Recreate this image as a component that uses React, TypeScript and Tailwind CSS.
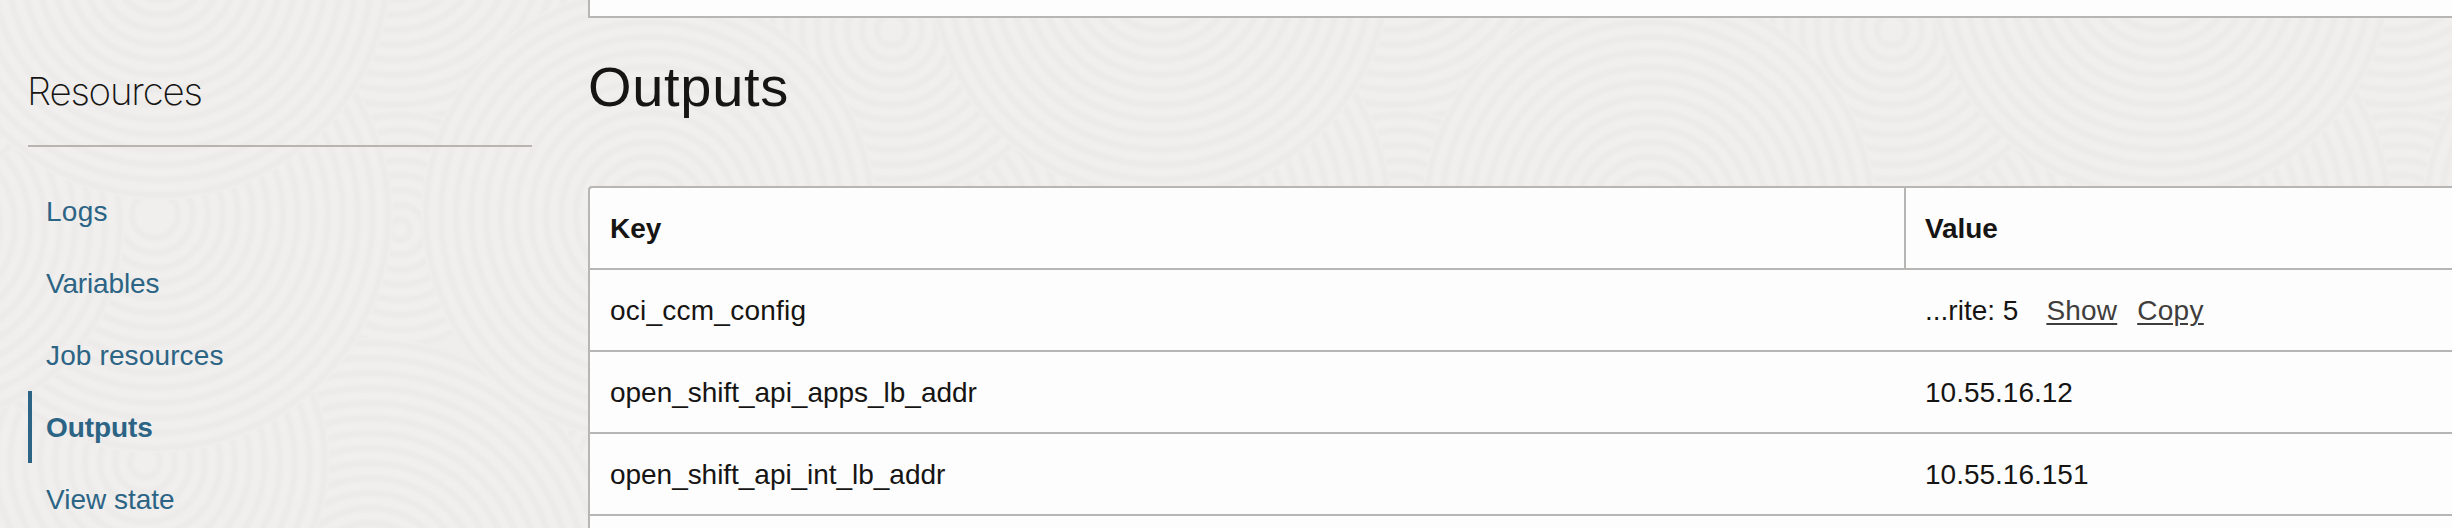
import React from "react";

type Disc = { x: number; y: number; r: number };

const TILE = 1000;

const discs: Disc[] = [
  { x: 395, y: -60, r: 215 },
  { x: 400, y: 230, r: 120 },
  { x: 700, y: 500, r: 240 },
  { x: 370, y: 590, r: 252 },
  { x: 145, y: 462, r: 185 },
  { x: 155, y: 215, r: 238 },
  { x: 925, y: 225, r: 200 },
  { x: 892, y: 30, r: 170 },
  { x: 649, y: 215, r: 228 },
  { x: 160, y: -32, r: 232 },
];

function Backdrop() {
  return (
    <svg className="absolute inset-0 h-full w-full" aria-hidden="true">
      <defs>
        <pattern id="rings" width={TILE} height="528" patternUnits="userSpaceOnUse">
          <rect width={TILE} height="528" fill="#efeeec" />
          {discs.map((d, i) =>
            [-TILE, 0, TILE].map((dx) => (
              <g key={`${i}${dx}`}>
                <circle cx={d.x + dx} cy={d.y} r={d.r} fill="#f0efed" />
                {Array.from({ length: Math.floor(d.r / 15) }, (_, k) => (
                  <circle
                    key={k}
                    cx={d.x + dx}
                    cy={d.y}
                    r={d.r - 5 - k * 15}
                    fill="none"
                    stroke="#eeedeb"
                    strokeWidth="8"
                  />
                ))}
                {Array.from({ length: Math.floor(d.r / 15) }, (_, k) => (
                  <circle
                    key={k}
                    cx={d.x + dx}
                    cy={d.y}
                    r={d.r - 5 - k * 15}
                    fill="none"
                    stroke="#ecebe9"
                    strokeWidth="4"
                  />
                ))}
              </g>
            ))
          )}
        </pattern>
      </defs>
      <rect width="100%" height="100%" fill="url(#rings)" />
    </svg>
  );
}

const links = [
  { label: "Logs", track: "tracking-[0.3px]" },
  { label: "Variables", track: "tracking-[-0.15px]" },
  { label: "Job resources", track: "tracking-[0.13px]" },
  { label: "Outputs", track: "tracking-[-0.1px]", active: true },
  { label: "View state", track: "" },
];

const rows = [
  { key: "oci_ccm_config", track: "tracking-[0.24px]", value: "...rite: 5", secret: true },
  { key: "open_shift_api_apps_lb_addr", track: "tracking-[-0.02px]", value: "10.55.16.12" },
  { key: "open_shift_api_int_lb_addr", track: "tracking-[-0.04px]", value: "10.55.16.151" },
];

export default function App() {
  return (
    <div className="relative h-[528px] w-[2452px] overflow-hidden bg-[#f0efed] font-['Liberation_Sans',Arial,sans-serif] text-[28px] leading-[40px] text-[#161513]">
      <Backdrop />
      <div className="relative flex h-full">
        <aside className="w-[588px] shrink-0 pl-7">
          <h2 className="h-[147px] w-[504px] border-b-2 border-[#b8b5b1] pt-[67px] font-[Inter,sans-serif] text-[38.5px] leading-[48px] font-extralight tracking-[-1.2px]">
            <span className="-ml-px">Resources</span>
          </h2>
          <nav className="mt-7 flex flex-col">
            {links.map((l) => (
              <a
                key={l.label}
                className={`flex h-[72px] items-center border-l-4 pt-0.5 pl-[14px] text-[#2c6485] ${
                  l.active ? "border-[#2c6485] font-bold" : "border-transparent"
                }`}
              >
                <span className={l.track}>{l.label}</span>
              </a>
            ))}
          </nav>
        </aside>
        <main className="flex flex-1 flex-col">
          <section className="h-[18px] shrink-0 border-b-2 border-l-2 border-[#b8b6b4] bg-[#fdfdfd]" />
          <h1 className="h-[168px] shrink-0 pt-[37px] text-[56px] leading-[64px] tracking-[0.7px]">
            Outputs
          </h1>
          <div className="flex-1 rounded-tl-[4px] border-t-2 border-l-2 border-[#b8b6b4] bg-[#fdfdfd]">
            <div className="flex h-[82px] border-b-2 border-[#b8b6b4] font-bold">
              <div className="flex w-[1316px] items-center border-r-2 border-[#b8b6b4] pt-0.5 pl-5">
                Key
              </div>
              <div className="flex items-center pt-0.5 pl-[19px] tracking-[-0.1px]">Value</div>
            </div>
            {rows.map((r) => (
              <div key={r.key} className="flex h-[82px] border-b-2 border-[#b8b6b4] pt-0.5">
                <div className="flex w-[1316px] items-center pl-5">
                  <span className={r.track}>{r.key}</span>
                </div>
                <div className="flex items-center pl-[19px]">
                  <span>{r.value}</span>
                  {r.secret && (
                    <span className="ml-7 flex gap-5 text-[#403e3c]">
                      <a className="tracking-[0.2px] underline decoration-2 underline-offset-[3px]">Show</a>
                      <a className="tracking-[0.3px] underline decoration-2 underline-offset-[3px]">Copy</a>
                    </span>
                  )}
                </div>
              </div>
            ))}
          </div>
        </main>
      </div>
    </div>
  );
}
